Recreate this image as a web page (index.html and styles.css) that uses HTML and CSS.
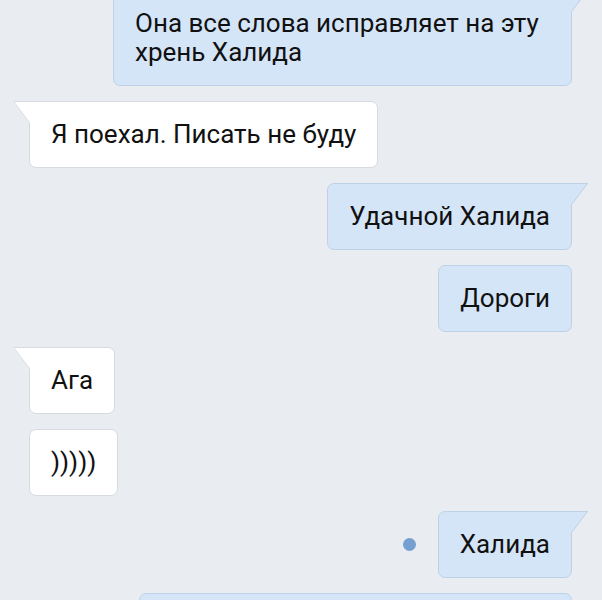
FILE: index.html
```html
<!DOCTYPE html>
<html lang="ru">
<head>
    <meta charset="UTF-8">
    <meta name="viewport" content="width=device-width, initial-scale=1.0">
    <title>Чат</title>
    <link rel="stylesheet" href="styles.css">
</head>
<body>
    <div class="chat">
        <div class="row out">
            <div class="msg out wide">Она все слова исправляет на эту хрень Халида
                <svg class="tail" width="19" height="24" viewBox="0 0 19 24"><polygon points="19,0 0.5,0 17.5,22 19,22"/><path d="M19 0.5 H1.5 L17.5 21.5"/></svg>
            </div>
        </div>

        <div class="row in">
            <div class="msg in">Я поехал. Писать не буду
                <svg class="tail" width="19" height="24" viewBox="0 0 19 24"><polygon points="19,0 0.5,0 17.5,22 19,22"/><path d="M19 0.5 H1.5 L17.5 21.5"/></svg>
            </div>
        </div>

        <div class="row out">
            <div class="msg out">Удачной Халида
                <svg class="tail" width="19" height="24" viewBox="0 0 19 24"><polygon points="19,0 0.5,0 17.5,22 19,22"/><path d="M19 0.5 H1.5 L17.5 21.5"/></svg>
            </div>
        </div>
        <div class="row out">
            <div class="msg out plain">Дороги</div>
        </div>

        <div class="row in">
            <div class="msg in">Ага
                <svg class="tail" width="19" height="24" viewBox="0 0 19 24"><polygon points="19,0 0.5,0 17.5,22 19,22"/><path d="M19 0.5 H1.5 L17.5 21.5"/></svg>
            </div>
        </div>
        <div class="row in">
            <div class="msg in plain">)))))</div>
        </div>

        <div class="row out">
            <span class="unread"></span>
            <div class="msg out">Халида
                <svg class="tail" width="19" height="24" viewBox="0 0 19 24"><polygon points="19,0 0.5,0 17.5,22 19,22"/><path d="M19 0.5 H1.5 L17.5 21.5"/></svg>
            </div>
        </div>
        <div class="row out">
            <div class="msg out plain cut">&nbsp;</div>
        </div>
    </div>
</body>
</html>
```

FILE: styles.css
```css
body {
    margin: 0;
    background-color: #e9edf2;
    font-family: Roboto, "Noto Sans", sans-serif;
    color: #111;
    overflow: hidden;
}
.chat {
    display: flex;
    flex-direction: column;
    gap: 15px;
    padding: 0 30px 0 29px;
    margin-top: -10px;
}
.row {
    display: flex;
    align-items: center;
}
.row.out {
    justify-content: flex-end;
    gap: 22px;
}
.row.in {
    justify-content: flex-start;
}
.msg {
    position: relative;
    font-size: 26px;
    line-height: 29px;
    padding: 18px 21px;
    border-radius: 7px;
    max-width: 459px;
    box-sizing: border-box;
}
.msg.in {
    background-color: #fff;
    border: 1px solid #d6dbe1;
    border-top-left-radius: 0;
}
.msg.out {
    background-color: #d5e5f8;
    border: 1px solid #bfd1e7;
    border-top-right-radius: 0;
}
.msg.plain {
    border-radius: 7px;
}
.msg.wide {
    width: 459px;
}
.msg.cut {
    width: 433px;
}
.tail {
    position: absolute;
    top: -1px;
}
.msg.in .tail {
    left: -18px;
}
.msg.out .tail {
    right: -18px;
    transform: scaleX(-1);
}
.msg.in .tail polygon {
    fill: #fff;
}
.msg.in .tail path {
    fill: none;
    stroke: #d6dbe1;
}
.msg.out .tail polygon {
    fill: #d5e5f8;
}
.msg.out .tail path {
    fill: none;
    stroke: #bfd1e7;
}
.unread {
    width: 13px;
    height: 13px;
    border-radius: 50%;
    background-color: #769fd1;
}
```
